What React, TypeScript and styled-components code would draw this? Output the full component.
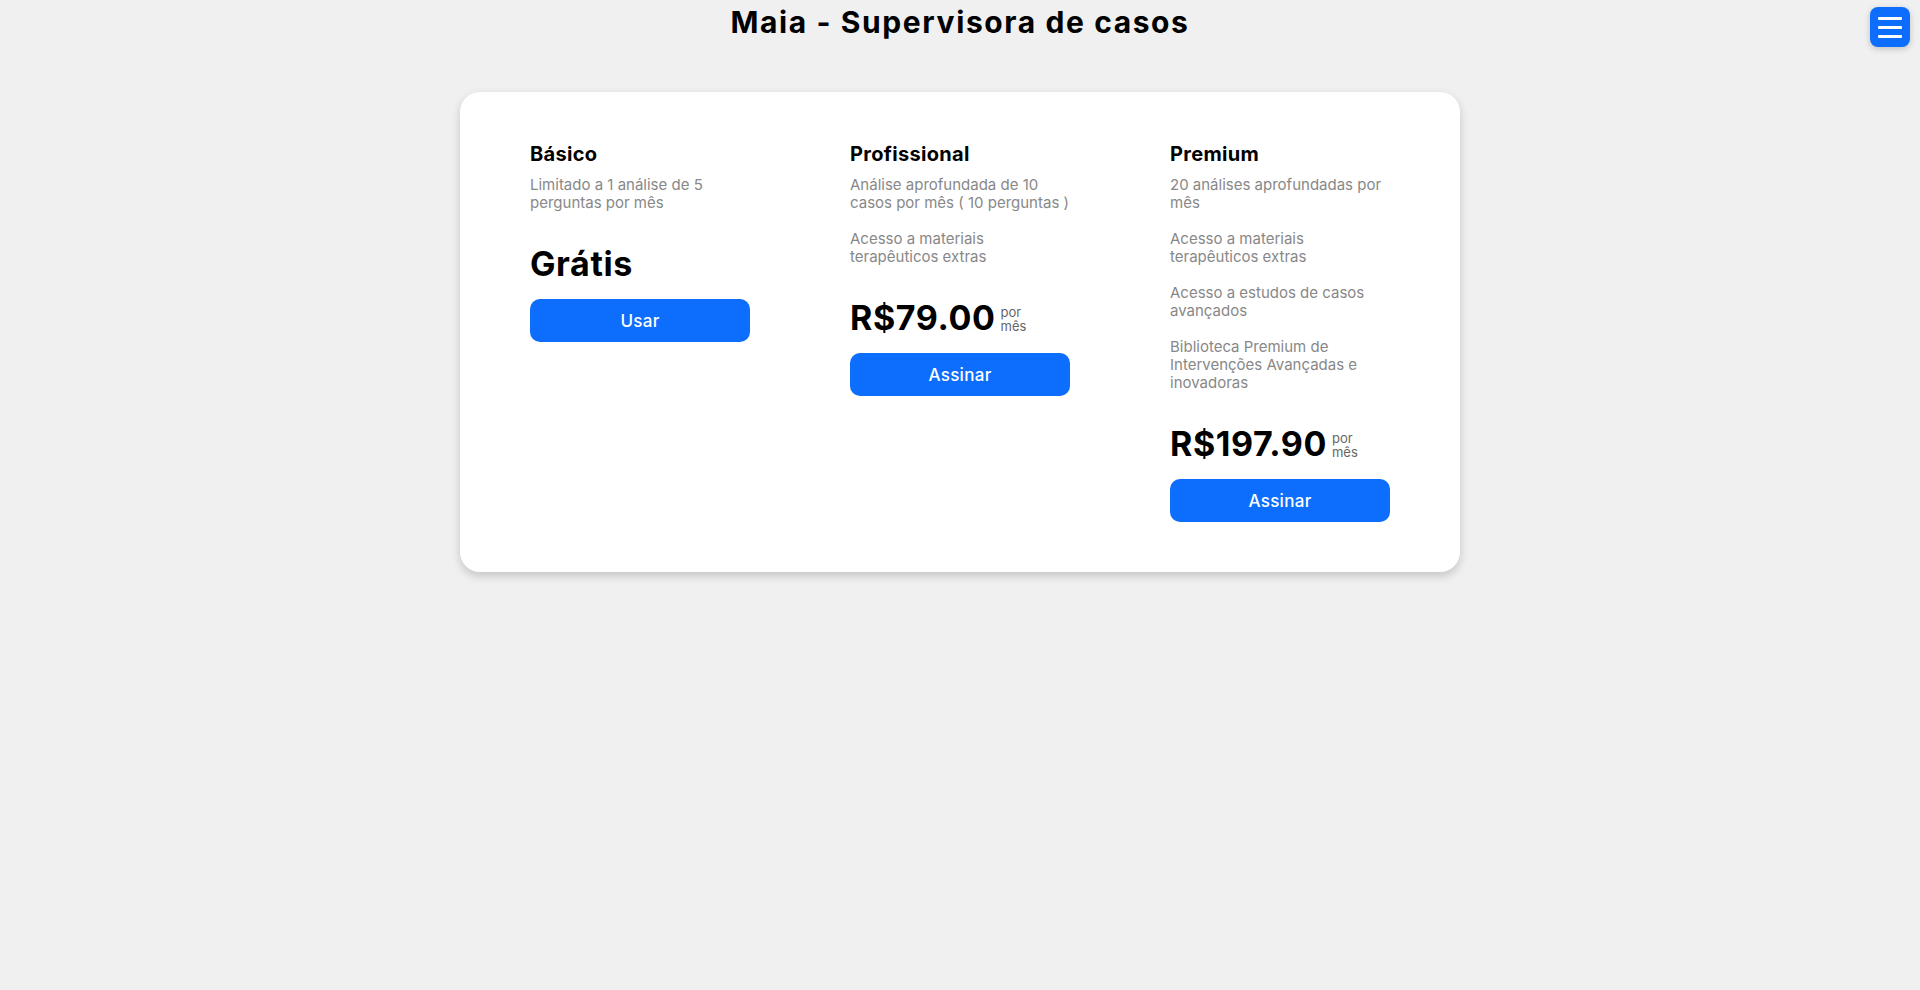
import styled, { createGlobalStyle } from "styled-components";

const GlobalStyle = createGlobalStyle`
	html, body {
		margin: 0;
		padding: 0;
		background: #f0f0f0;
		font-family: Inter, "Open Sans", sans-serif;
		color: #000;
	}
	* {
		box-sizing: border-box;
	}
`;

const Page = styled.main`
	min-height: 100vh;
	display: flex;
	flex-direction: column;
	align-items: center;
`;

const Title = styled.h1`
	margin: 0 0 52px;
	padding-top: 4px;
	font-size: 30px;
	line-height: 36px;
	font-weight: 700;
	letter-spacing: 1.6px;
`;

const MenuButton = styled.button`
	position: fixed;
	top: 7px;
	right: 10px;
	width: 40px;
	height: 40px;
	border: none;
	border-radius: 8px;
	background: #0d6efd;
	box-shadow: 0 2px 6px rgba(0, 0, 0, 0.2);
	display: flex;
	flex-direction: column;
	align-items: center;
	justify-content: center;
	gap: 6px;
	padding: 0;
	cursor: pointer;
`;

const MenuLine = styled.span`
	display: block;
	width: 24px;
	height: 3px;
	border-radius: 1px;
	background: #fff;
`;

const Card = styled.section`
	width: 1000px;
	background: #fff;
	border-radius: 20px;
	box-shadow: 0 4px 10px rgba(0, 0, 0, 0.18);
	padding: 50px 70px;
	display: grid;
	grid-template-columns: repeat(3, 220px);
	column-gap: 100px;
	align-items: start;
`;

const Plan = styled.div`
	display: flex;
	flex-direction: column;
`;

const PlanName = styled.h2`
	margin: 0 0 10px;
	font-size: 20px;
	line-height: 24px;
	font-weight: 700;
	letter-spacing: 0.3px;
`;

const Feature = styled.p`
	margin: 0 0 18px;
	font-size: 15px;
	line-height: 18px;
	color: #888;
	font-weight: 400;
`;

const PriceRow = styled.div`
	display: flex;
	align-items: center;
	gap: 5px;
	margin: 13px 0 15px;
`;

const Price = styled.span`
	font-size: 34px;
	line-height: 41px;
	font-weight: 700;
	letter-spacing: 0.6px;
`;

const Period = styled.span`
	font-size: 13px;
	line-height: 14px;
	color: #666;
	display: flex;
	flex-direction: column;
	margin-top: 2px;
`;

const ActionButton = styled.button`
	width: 220px;
	height: 43px;
	border: none;
	border-radius: 10px;
	background: #0d6efd;
	color: #fff;
	font-family: inherit;
	font-size: 17px;
	font-weight: 500;
	letter-spacing: 0.3px;
	cursor: pointer;
`;

type PlanData = {
	name: string;
	features: string[];
	price: string;
	monthly: boolean;
	action: string;
};

const plans: PlanData[] = [
	{
		name: "Básico",
		features: ["Limitado a 1 análise de 5 perguntas por mês"],
		price: "Grátis",
		monthly: false,
		action: "Usar",
	},
	{
		name: "Profissional",
		features: [
			"Análise aprofundada de 10 casos por mês ( 10 perguntas )",
			"Acesso a materiais terapêuticos extras",
		],
		price: "R$79.00",
		monthly: true,
		action: "Assinar",
	},
	{
		name: "Premium",
		features: [
			"20 análises aprofundadas por mês",
			"Acesso a materiais terapêuticos extras",
			"Acesso a estudos de casos avançados",
			"Biblioteca Premium de Intervenções Avançadas e inovadoras",
		],
		price: "R$197.90",
		monthly: true,
		action: "Assinar",
	},
];

const App = () => {
	return (
		<>
			<GlobalStyle />
			<Page>
				<Title>Maia - Supervisora de casos</Title>
				<MenuButton aria-label="Menu">
					<MenuLine />
					<MenuLine />
					<MenuLine />
				</MenuButton>

				<Card>
					{plans.map((plan) => (
						<Plan key={plan.name}>
							<PlanName>{plan.name}</PlanName>
							{plan.features.map((f, idx) => (
								<Feature key={idx}>{f}</Feature>
							))}
							<PriceRow>
								<Price>{plan.price}</Price>
								{plan.monthly && (
									<Period>
										<span>por</span>
										<span>mês</span>
									</Period>
								)}
							</PriceRow>
							<ActionButton>{plan.action}</ActionButton>
						</Plan>
					))}
				</Card>
			</Page>
		</>
	);
};

export default App;
